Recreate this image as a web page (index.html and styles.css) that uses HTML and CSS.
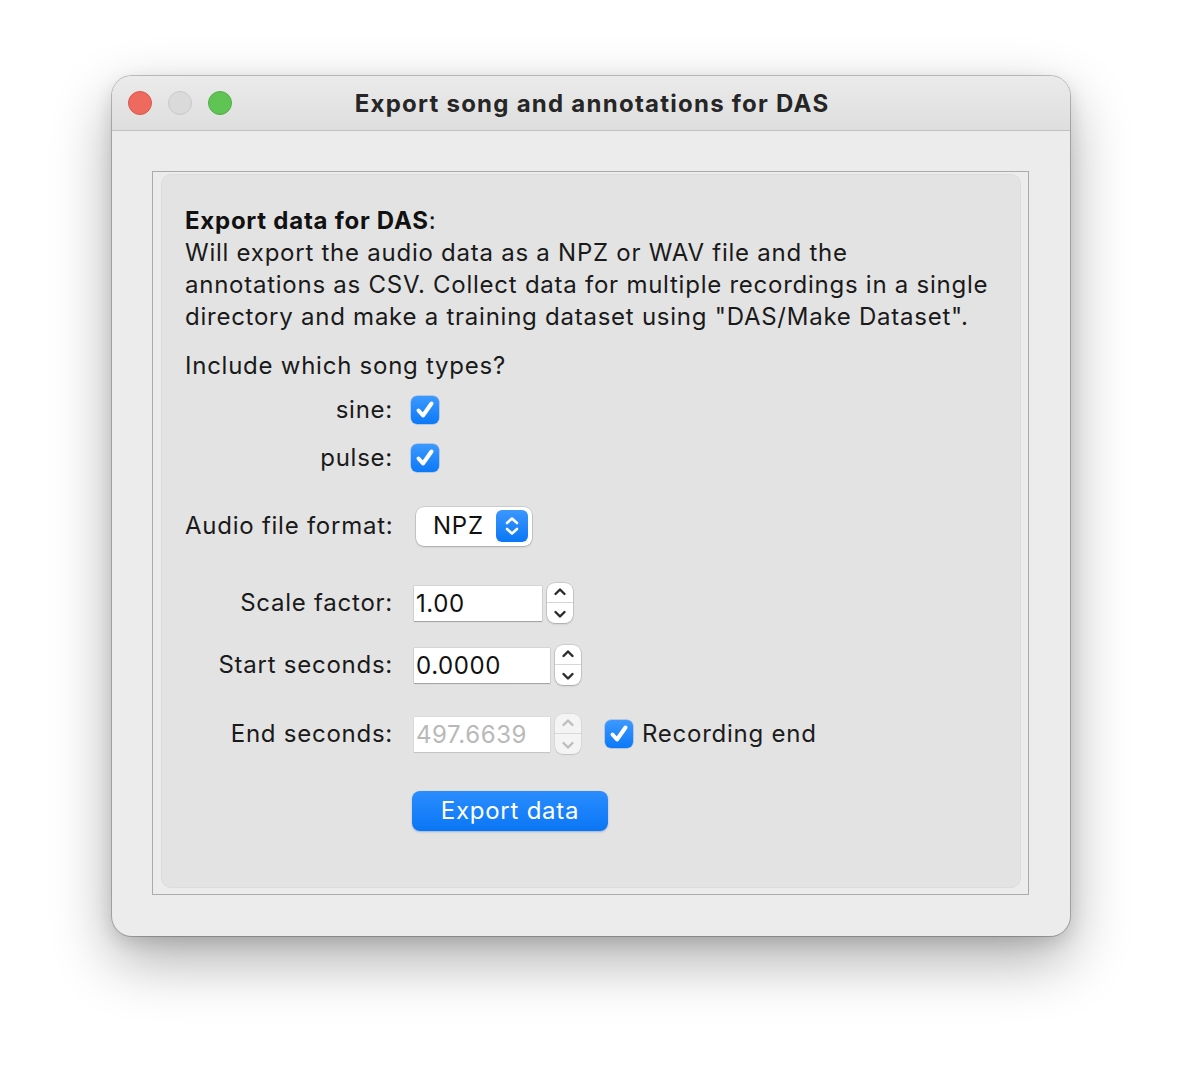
FILE: index.html
```html
<!DOCTYPE html>
<html>
<head>
<meta charset="utf-8">
<link rel="stylesheet" href="styles.css">
</head>
<body>
<div class="window">
  <div class="titlebar">
    <div class="lights">
      <span class="light red"></span>
      <span class="light gray"></span>
      <span class="light green"></span>
    </div>
    <div class="title">Export song and annotations for DAS</div>
  </div>
  <div class="content">
    <div class="frame">
      <div class="panel">
        <p class="desc"><b>Export data for DAS</b>:<br>Will export the audio data as a NPZ or WAV file and the<br>annotations as CSV. Collect data for multiple recordings in a single<br>directory and make a training dataset using "DAS/Make Dataset".</p>
        <p class="include">Include which song types?</p>
        <div class="row r-sine">
          <span class="label">sine:</span>
          <span class="check cb-indent"><svg viewBox="0 0 28 28"><path d="M7.5 14.5 L12 19.5 L20.5 7.5" /></svg></span>
        </div>
        <div class="row r-pulse">
          <span class="label">pulse:</span>
          <span class="check cb-indent"><svg viewBox="0 0 28 28"><path d="M7.5 14.5 L12 19.5 L20.5 7.5" /></svg></span>
        </div>
        <div class="row r-audio">
          <span class="label">Audio file format:</span>
          <span class="select"><span class="select-text">NPZ</span><span class="select-btn"><svg viewBox="0 0 32 32"><path d="M11 13 L16 8.5 L21 13 M11 19 L16 23.5 L21 19" /></svg></span></span>
        </div>
        <div class="row r-scale">
          <span class="label">Scale factor:</span>
          <span class="field w128">1.00</span>
          <span class="spin"><svg viewBox="0 0 26 40"><path class="chev" d="M8.5 11 L13 6.5 L17.5 11 M8.5 29 L13 33.5 L17.5 29" /></svg></span>
        </div>
        <div class="row r-start">
          <span class="label">Start seconds:</span>
          <span class="field w136">0.0000</span>
          <span class="spin"><svg viewBox="0 0 26 40"><path class="chev" d="M8.5 11 L13 6.5 L17.5 11 M8.5 29 L13 33.5 L17.5 29" /></svg></span>
        </div>
        <div class="row r-end">
          <span class="label">End seconds:</span>
          <span class="field w136 disabled">497.6639</span>
          <span class="spin disabled"><svg viewBox="0 0 26 40"><path class="chev" d="M8.5 11 L13 6.5 L17.5 11 M8.5 29 L13 33.5 L17.5 29" /></svg></span>
          <span class="check rec"><svg viewBox="0 0 28 28"><path d="M7.5 14.5 L12 19.5 L20.5 7.5" /></svg></span>
          <span class="rec-label">Recording end</span>
        </div>
        <div class="row r-button">
          <span class="label"></span>
          <span class="button">Export data</span>
        </div>
      </div>
    </div>
  </div>
</div>
</body>
</html>
```

FILE: styles.css
```css
html, body {
  margin: 0;
  padding: 0;
  background: #ffffff;
}
body {
  font-family: Inter, "Noto Sans", "Liberation Sans", sans-serif;
  color: #1c1c1c;
  width: 1182px;
  height: 1084px;
  overflow: hidden;
}
.window {
  margin: 76px 0 0 112px;
  width: 958px;
  height: 860px;
  border-radius: 20px;
  background: #ececec;
  box-shadow: 0 0 0 1px rgba(0,0,0,0.22), 0 24px 60px rgba(0,0,0,0.32), 0 6px 18px rgba(0,0,0,0.12);
  overflow: hidden;
  display: flex;
  flex-direction: column;
}
.titlebar {
  height: 54px;
  border-bottom: 1px solid #c2c2c2;
  background: linear-gradient(#ebebeb, #dedede);
  position: relative;
  display: flex;
  align-items: center;
  justify-content: center;
}
.lights {
  position: absolute;
  left: 16px;
  top: 15px;
  display: flex;
  gap: 16px;
}
.light {
  width: 24px;
  height: 24px;
  border-radius: 50%;
  box-sizing: border-box;
}
.red { background: #ee6a5f; border: 1px solid #d8574c; }
.gray { background: #dadada; border: 1px solid #c8c8c8; }
.green { background: #5fc454; border: 1px solid #4fae45; }
.title {
  font-weight: 700;
  font-size: 24px;
  color: #262626;
  letter-spacing: 1.25px;
  padding-left: 2px;
}
.content {
  flex: 1;
  padding: 40px 41px 41px 40px;
  display: flex;
}
.frame {
  flex: 1;
  border: 1px solid #ababab;
  padding: 2px 7px 6px 8px;
  display: flex;
}
.panel {
  flex: 1;
  background: #e3e3e3;
  border: 1px solid #dcdcdc;
  border-radius: 10px;
  padding: 30px 20px 0 23px;
  font-size: 24px;
  line-height: 32px;
  letter-spacing: 0.75px;
  color: #1a1a1a;
  white-space: nowrap;
}
.desc {
  margin: 0;
}
.desc b { color: #111; }
.include {
  margin: 17px 0 0 0;
}
.row {
  display: flex;
  align-items: center;
  height: 40px;
}
.label {
  width: 208px;
  text-align: right;
  flex: none;
  margin-right: 21px;
}
.r-sine { margin-top: 8px; }
.r-pulse { margin-top: 8px; }
.r-audio { margin-top: 28px; }
.r-scale { margin-top: 37px; }
.r-start { margin-top: 22px; }
.r-end { margin-top: 29px; }
.r-button { margin-top: 37px; }
.check {
  width: 28px;
  height: 28px;
  border-radius: 6px;
  background: linear-gradient(#3d99ff, #0b79f7);
  box-shadow: 0 0 0 0.5px rgba(0,80,200,0.4);
  display: inline-flex;
}
.check svg { width: 28px; height: 28px; }
.check path {
  fill: none;
  stroke: #fff;
  stroke-width: 4;
  stroke-linecap: round;
  stroke-linejoin: round;
}
.cb-indent { margin-left: -3px; }
.select {
  margin-left: 2px;
  width: 116px;
  height: 39px;
  box-sizing: border-box;
  background: #fff;
  border-radius: 8px;
  box-shadow: 0 0 0 0.5px rgba(0,0,0,0.18), 0 1px 2px rgba(0,0,0,0.2);
  display: flex;
  align-items: center;
  padding: 0 4px 0 17px;
  justify-content: space-between;
}
.select-text { color: #111; }
.select-btn {
  width: 32px;
  height: 32px;
  border-radius: 6px;
  background: linear-gradient(#3c97ff, #0a77f5);
  display: inline-flex;
}
.select-btn svg { width: 32px; height: 32px; }
.select-btn path {
  fill: none;
  stroke: #fff;
  stroke-width: 2.6;
  stroke-linecap: round;
  stroke-linejoin: round;
}
.field {
  height: 35px;
  box-sizing: border-box;
  background: #fff;
  box-shadow: 0 0 0 0.5px rgba(0,0,0,0.12), 0 1px 1px rgba(0,0,0,0.22);
  padding-left: 2px;
  line-height: 35px;
  color: #111;
  letter-spacing: 0.6px;
}
.w128 { width: 128px; }
.w136 { width: 136px; }
.field.disabled {
  color: #b9b9b9;
  box-shadow: 0 0 0 0.5px rgba(0,0,0,0.06), 0 1px 1px rgba(0,0,0,0.1);
}
.spin {
  margin-left: 5px;
  width: 26px;
  height: 40px;
  box-sizing: border-box;
  background: #fff;
  border-radius: 8px;
  box-shadow: 0 0 0 0.5px rgba(0,0,0,0.18), 0 1px 2px rgba(0,0,0,0.2);
  background-image: linear-gradient(to bottom, transparent 19.5px, #d8d8d8 19.5px, #d8d8d8 20.5px, transparent 20.5px);
  display: inline-flex;
}
.spin svg { width: 26px; height: 40px; }
.spin .chev {
  fill: none;
  stroke: #2a2a2a;
  stroke-width: 2.4;
  stroke-linecap: round;
  stroke-linejoin: round;
}
.spin.disabled {
  background-color: #f4f4f4;
  box-shadow: 0 0 0 0.5px rgba(0,0,0,0.08), 0 1px 1px rgba(0,0,0,0.1);
}
.spin.disabled .chev { stroke: #bdbdbd; }
.rec { margin-left: 24px; }
.rec-label { margin-left: 9px; color: #1c1c1c; }
.button {
  margin-left: -2px;
  width: 196px;
  height: 40px;
  border-radius: 8px;
  background: linear-gradient(#2b8dff, #0a76f5);
  box-shadow: 0 1px 2px rgba(0,60,160,0.3);
  color: #fff;
  text-align: center;
  line-height: 40px;
}
```
